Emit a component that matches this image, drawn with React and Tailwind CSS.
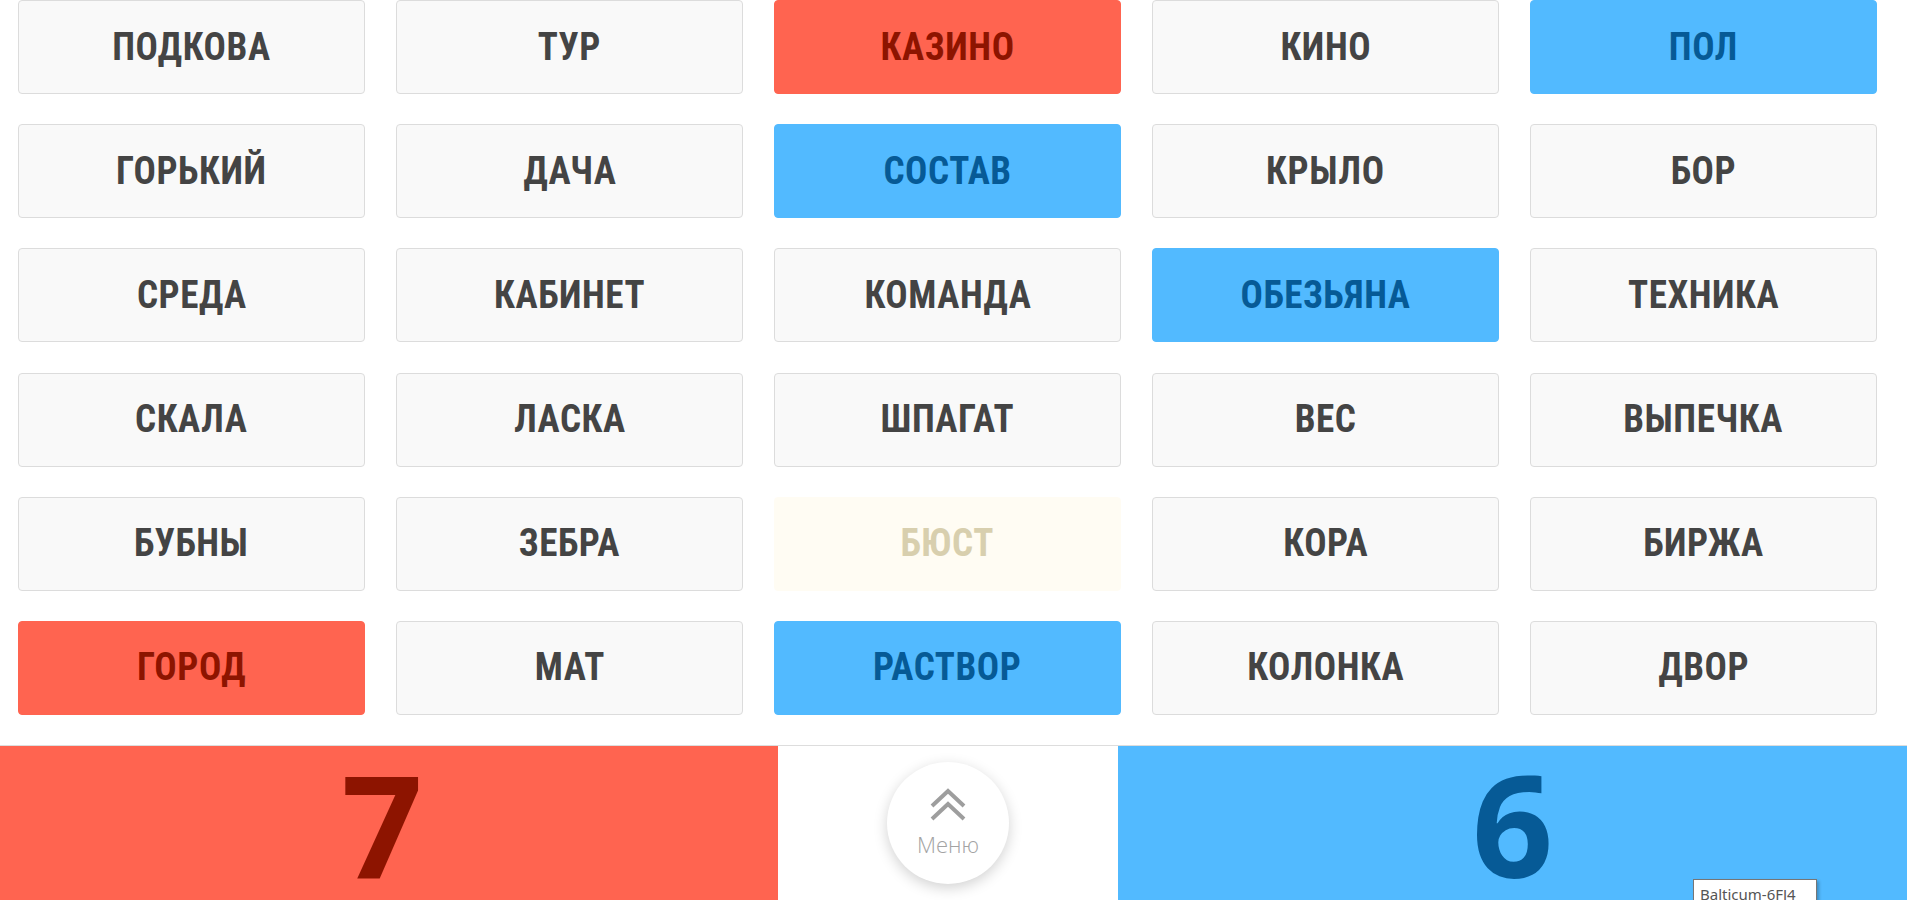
import React from "react";

const words = [
  ["ПОДКОВА", "n"], ["ТУР", "n"], ["КАЗИНО", "r"], ["КИНО", "n"], ["ПОЛ", "b"],
  ["ГОРЬКИЙ", "n"], ["ДАЧА", "n"], ["СОСТАВ", "b"], ["КРЫЛО", "n"], ["БОР", "n"],
  ["СРЕДА", "n"], ["КАБИНЕТ", "n"], ["КОМАНДА", "n"], ["ОБЕЗЬЯНА", "b"], ["ТЕХНИКА", "n"],
  ["СКАЛА", "n"], ["ЛАСКА", "n"], ["ШПАГАТ", "n"], ["ВЕС", "n"], ["ВЫПЕЧКА", "n"],
  ["БУБНЫ", "n"], ["ЗЕБРА", "n"], ["БЮСТ", "f"], ["КОРА", "n"], ["БИРЖА", "n"],
  ["ГОРОД", "r"], ["МАТ", "n"], ["РАСТВОР", "b"], ["КОЛОНКА", "n"], ["ДВОР", "n"],
];

const styles = {
  n: "bg-[#f9f9f9] border border-[#dcdcdc] text-[#444444]",
  r: "bg-[#ff6450] border border-[#ff6450] text-[#8d1400]",
  b: "bg-[#52baff] border border-[#52baff] text-[#065a96]",
  f: "bg-[#fffcf3] border border-[#fffcf3] text-[#d8cfae]",
};

function Card({ word, kind }) {
  return (
    <div className={`h-[94px] rounded-[4px] flex items-center justify-center ${styles[kind]}`}>
      <span className="inline-block scale-x-[0.95] font-bold text-[39px] leading-none tracking-[0.6px]">
        {word}
      </span>
    </div>
  );
}

export default function App() {
  return (
    <div
      className="relative h-[900px] overflow-hidden bg-white"
      style={{ fontFamily: "'Roboto Condensed', Roboto, 'Liberation Sans', sans-serif" }}
    >
      <div className="grid grid-cols-5 gap-x-[30.9px] gap-y-[30.2px] pl-[18px] pr-[30px] pb-[30px]">
        {words.map(([w, k]) => (
          <Card key={w} word={w} kind={k} />
        ))}
      </div>

      <div className="flex h-[156px] border-t border-[#dddddd]">
        <div className="w-[778px] bg-[#ff6450] flex items-center justify-center pr-[14px]">
          <span className="font-['Open_Sans',sans-serif] font-bold text-[142px] leading-none text-[#8d1400]">7</span>
        </div>
        <div className="w-[340px] flex items-center justify-center">
          <div className="w-[122px] h-[122px] rounded-full bg-white shadow-[0_4px_14px_rgba(0,0,0,0.18)] flex flex-col items-center justify-center gap-[9px] pb-[4px]">
            <svg width="36" height="36" viewBox="0 0 36 36" fill="none" stroke="#9e9e9e" strokeWidth="4">
              <polyline points="2,18 18,3 34,18" />
              <polyline points="2,31 18,16 34,31" />
            </svg>
            <span className="font-['Open_Sans',sans-serif] font-light text-[22px] leading-[22px] text-[#a3a3a3]">Меню</span>
          </div>
        </div>
        <div className="flex-1 bg-[#52baff] flex items-center justify-center">
          <span className="font-['Open_Sans',sans-serif] font-bold text-[142px] leading-none text-[#065a96]">6</span>
        </div>
      </div>

      <div className="absolute left-[1693px] top-[879px] border border-[#767676] bg-white pl-[6px] pt-[3px] h-[30px] w-[124px] shadow-[2px_2px_3px_rgba(0,0,0,0.25)]">
        <span className="font-['Noto_Sans',sans-serif] text-[15px] text-[#555555] leading-none">Balticum-6FJ4</span>
      </div>
    </div>
  );
}
